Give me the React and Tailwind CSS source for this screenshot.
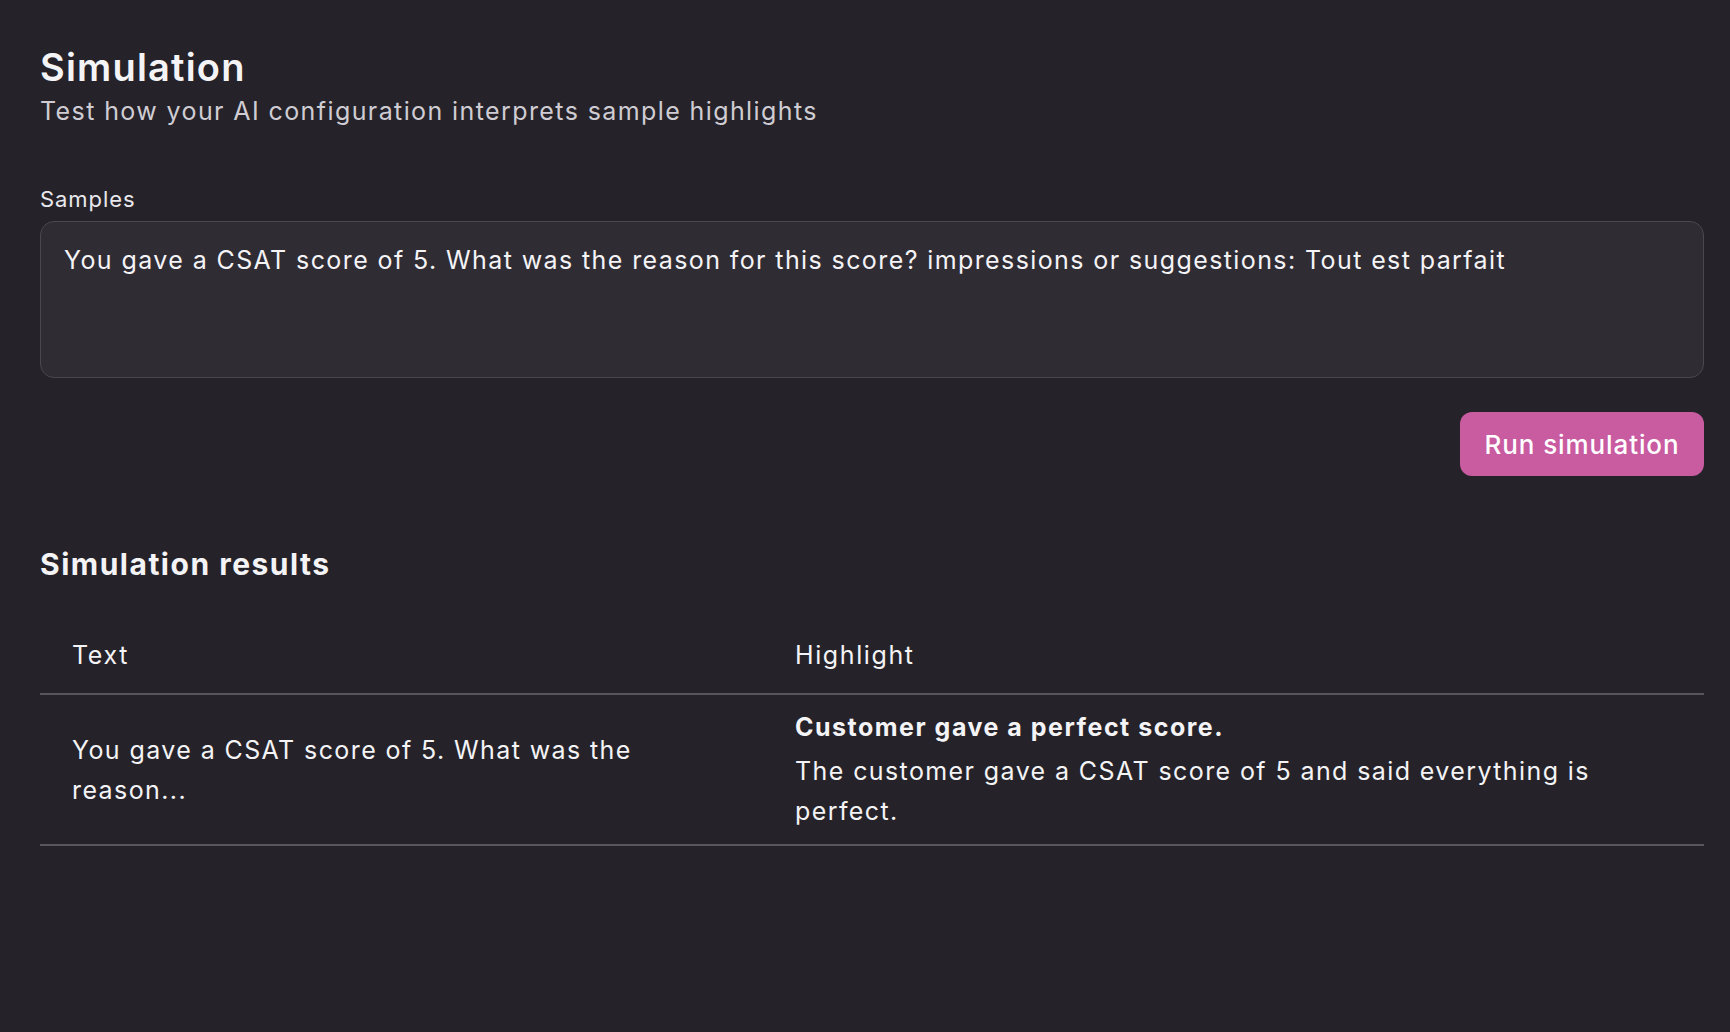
import React from 'react';

const sample =
  'You gave a CSAT score of 5. What was the reason for this score? impressions or suggestions: Tout est parfait';

export default function App() {
  return (
    <div
      className="min-h-screen w-full bg-[#252329] text-[#f4f3f6] pl-[40px] pr-[26px] pt-[44px] tracking-[1.4px]"
      style={{ fontFamily: 'Inter, "Noto Sans", sans-serif' }}
    >
      {/* Header */}
      <h1 className="text-[38px] leading-[46px] font-semibold tracking-[1.2px]">Simulation</h1>
      <p className="text-[25px] leading-[42px] text-[#cfcdd3]">
        Test how your AI configuration interprets sample highlights
      </p>

      {/* Samples */}
      <div className="mt-[52px] text-[22px] leading-[30px] tracking-[0.95px] text-[#e9e8ec]">Samples</div>
      <textarea
        defaultValue={sample}
        className="mt-[7px] block w-full h-[157px] resize-none rounded-[14px] border border-[#4a4750] bg-[#2f2c34] pl-[23px] pr-[22px] pt-[19px] text-[25px] leading-[38px] tracking-[1.4px] text-[#f4f3f6] outline-none"
      />

      <div className="mt-[34px] flex justify-end">
        <button className="h-[64px] w-[244px] rounded-[12px] bg-[#c95ba1] text-[26px] font-medium tracking-[0.9px] text-white">
          Run simulation
        </button>
      </div>

      {/* Results */}
      <h2 className="mt-[68px] text-[30px] leading-[40px] font-bold tracking-[1.5px]">Simulation results</h2>

      <table className="mt-[33px] w-full border-collapse text-[25px]">
        <thead>
          <tr className="border-b-2 border-[#58565c]">
            <th className="w-[723px] px-[32px] py-[18px] text-left font-normal leading-[40px] tracking-[1.6px]">Text</th>
            <th className="px-[32px] py-[18px] text-left font-normal leading-[40px] tracking-[1.6px]">Highlight</th>
          </tr>
        </thead>
        <tbody>
          <tr className="border-b-2 border-[#58565c]">
            <td className="px-[32px] align-middle leading-[40px]">
              <div className="max-w-[600px]">You gave a CSAT score of 5. What was the reason...</div>
            </td>
            <td className="px-[32px] pt-[16px] pb-[13px] align-top">
              <div className="font-bold leading-[32px] tracking-[1.5px]">Customer gave a perfect score.</div>
              <div className="mt-[8px] leading-[40px] max-w-[860px]">
                The customer gave a CSAT score of 5 and said everything is perfect.
              </div>
            </td>
          </tr>
        </tbody>
      </table>
    </div>
  );
}
